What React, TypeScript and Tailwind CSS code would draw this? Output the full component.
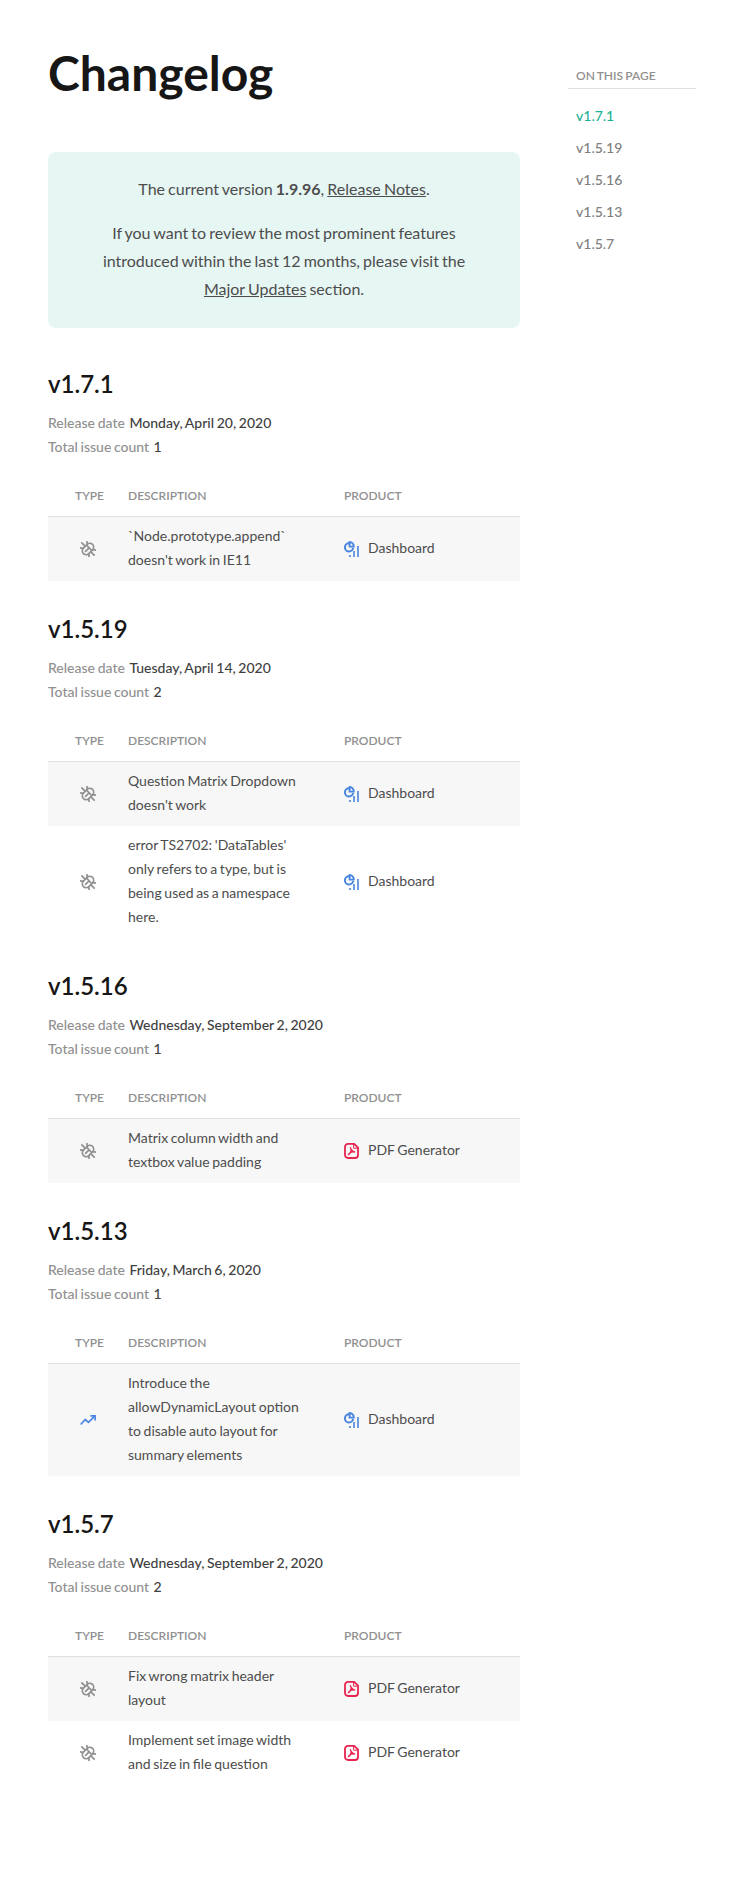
import React from "react";

type Kind = "bug" | "feature";
type Product = "Dashboard" | "PDF Generator";
type Issue = { kind: Kind; text: string; product: Product };
type Release = { version: string; date: string; issues: Issue[] };

const releases: Release[] = [
  {
    version: "v1.7.1",
    date: "Monday, April 20, 2020",
    issues: [{ kind: "bug", text: "`Node.prototype.append` doesn't work in IE11", product: "Dashboard" }],
  },
  {
    version: "v1.5.19",
    date: "Tuesday, April 14, 2020",
    issues: [
      { kind: "bug", text: "Question Matrix Dropdown doesn't work", product: "Dashboard" },
      {
        kind: "bug",
        text: "error TS2702: 'DataTables' only refers to a type, but is being used as a namespace here.",
        product: "Dashboard",
      },
    ],
  },
  {
    version: "v1.5.16",
    date: "Wednesday, September 2, 2020",
    issues: [{ kind: "bug", text: "Matrix column width and textbox value padding", product: "PDF Generator" }],
  },
  {
    version: "v1.5.13",
    date: "Friday, March 6, 2020",
    issues: [
      {
        kind: "feature",
        text: "Introduce the allowDynamicLayout option to disable auto layout for summary elements",
        product: "Dashboard",
      },
    ],
  },
  {
    version: "v1.5.7",
    date: "Wednesday, September 2, 2020",
    issues: [
      { kind: "bug", text: "Fix wrong matrix header layout", product: "PDF Generator" },
      { kind: "bug", text: "Implement set image width and size in file question", product: "PDF Generator" },
    ],
  },
];

function BugIcon() {
  return (
    <svg className="size-4 text-[#909090]" viewBox="0 0 16 16" fill="none" stroke="currentColor" strokeWidth="1.7">
      <g transform="rotate(45 8 8)">
        <rect x="4.2" y="1.6" width="7.6" height="12.8" rx="3.8" />
        <path d="M4.6 6.4h6.8M8 6.4v5.8" />
        <path d="M4.4 5.4L.6 2.4M4.2 8H-1.4M4.4 10.6L.6 13.6M11.6 5.4l3.8-3M11.8 8h5.6M11.6 10.6l3.8 3" />
      </g>
    </svg>
  );
}

function TrendIcon() {
  return (
    <svg className="size-4 text-[#4a86e0]" viewBox="0 0 16 16" fill="none" stroke="currentColor" strokeWidth="1.7">
      <path d="M.7 12.5L5.3 7.5l3.2 2.9L14.6 4.2" />
      <path d="M10.4 3.9h4.7v4.7" />
    </svg>
  );
}

function DashboardIcon() {
  return (
    <svg className="size-4 shrink-0 text-[#4a86e0]" viewBox="0 0 16 16" fill="none" stroke="currentColor">
      <path d="M5 2.3A4.1 4.1 0 1 0 9.1 6.9" strokeWidth="2" />
      <path d="M5.6 1v4.6h4.2A4.4 4.4 0 0 0 5.6 1z" strokeWidth="1.9" />
      <g fill="currentColor" stroke="none" opacity=".8">
        <rect x="5" y="14" width="2" height="2" />
        <rect x="9" y="10" width="2" height="6" />
        <rect x="13" y="5" width="2" height="11" />
      </g>
    </svg>
  );
}

function PdfIcon() {
  return (
    <svg className="size-4 shrink-0 text-[#e8234f]" viewBox="0 0 16 16" fill="none" stroke="currentColor" strokeWidth="1.8">
      <path d="M4 .9h6.2L14 4.7V12a3 3 0 0 1-3 3H4a3 3 0 0 1-3-3V4a3 3 0 0 1 3-3.1z" />
      <path d="M9.6 1v4.2H14" strokeWidth="1" />
      <path d="M6.2 4.2c.8 2.6 1.6 4.2 5 5M7.3 6.6c-.2 2.4-1 4.2-3.4 5.2M6 9.8c1.4-.9 3-1.1 5-.7" strokeWidth="1.3" />
    </svg>
  );
}

function ReleaseSection({ release }: { release: Release }) {
  return (
    <section className="mb-[33px]">
      <h2 className="-mt-px mb-[11px] text-2xl leading-8 font-semibold text-[#161616]">{release.version}</h2>
      <div className="text-sm leading-6 font-medium text-[#404040] [word-spacing:-0.9px]">
        <p>
          <span className="mr-[4.5px] text-[#909090]">Release date</span>
          {release.date}
        </p>
        <p>
          <span className="mr-[4.5px] text-[#909090]">Total issue count</span>
          {release.issues.length}
        </p>
      </div>
      <div className="mt-[25px] grid grid-cols-[80px_216px_1fr] border-b border-[#e0e0e0] pb-2 text-xs leading-6 font-semibold text-[#909090]">
        <span className="pl-[27px]">TYPE</span>
        <span>DESCRIPTION</span>
        <span>PRODUCT</span>
      </div>
      {release.issues.map((issue) => (
        <div
          key={issue.text}
          className="grid grid-cols-[80px_216px_1fr] items-center py-2 text-sm leading-6 text-[#4d4d4d] [word-spacing:-0.9px] odd:bg-white even:bg-[#f7f7f7]"
        >
          <span className="pl-8">{issue.kind === "bug" ? <BugIcon /> : <TrendIcon />}</span>
          <p className="-mt-px mb-px pr-10">{issue.text}</p>
          <div className="flex items-center gap-2">
            {issue.product === "Dashboard" ? <DashboardIcon /> : <PdfIcon />}
            <span className="-mt-px mb-px">{issue.product}</span>
          </div>
        </div>
      ))}
    </section>
  );
}

export default function App() {
  return (
    <div className="flex min-h-[1881px] items-start gap-12 bg-white pl-12 font-['Lato',sans-serif]">
      <main className="w-[472px] pt-[43px]">
        <h1 className="text-5xl leading-[60px] font-bold text-[#161616]">Changelog</h1>
        <div className="mt-[49px] mb-[41px] rounded-lg bg-[#e6f6f3] px-12 pt-[23px] pb-[25px] text-center text-base leading-7 text-[#4d4d4d] [word-spacing:-1px]">
          <p>
            The current version <strong className="font-bold">1.9.96</strong>,{" "}
            <a href="#notes" className="underline">Release Notes</a>.
          </p>
          <p className="mt-4">
            If you want to review the most prominent features introduced within the last 12 months, please visit the{" "}
            <a href="#updates" className="underline">Major Updates</a> section.
          </p>
        </div>
        {releases.map((r) => (
          <ReleaseSection key={r.version} release={r} />
        ))}
      </main>
      <nav className="w-32 pt-16">
        <div className="border-b border-[#e0e0e0] pl-2 text-xs leading-6 font-semibold text-[#909090] [word-spacing:-0.8px]">ON THIS PAGE</div>
        <ul className="mt-[11px] pl-2 text-sm leading-8 font-medium text-[#808080]">
          {releases.map((r, i) => (
            <li key={r.version} className={i === 0 ? "text-[#19b394]" : undefined}>
              {r.version}
            </li>
          ))}
        </ul>
      </nav>
    </div>
  );
}
